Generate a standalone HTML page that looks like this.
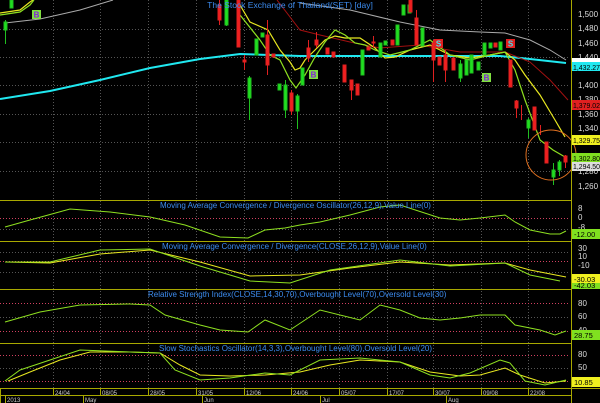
<!DOCTYPE html>
<html><head><meta charset="utf-8"><style>
html,body{margin:0;padding:0;background:#000;width:600px;height:403px;overflow:hidden}
svg{display:block}
text{font-family:"Liberation Sans",sans-serif}
</style></head><body>
<svg width="600" height="403" viewBox="0 0 600 403" xmlns="http://www.w3.org/2000/svg">
<rect width="600" height="403" fill="#000"/>
<g stroke="#555" stroke-dasharray="1,2" stroke-width="1">
<line x1="53.5" y1="0" x2="53.5" y2="388"/><line x1="100.5" y1="0" x2="100.5" y2="388"/>
<line x1="148.5" y1="0" x2="148.5" y2="388"/><line x1="196.5" y1="0" x2="196.5" y2="388"/>
<line x1="244.5" y1="0" x2="244.5" y2="388"/><line x1="291.5" y1="0" x2="291.5" y2="388"/>
<line x1="339.5" y1="0" x2="339.5" y2="388"/><line x1="387.5" y1="0" x2="387.5" y2="388"/>
<line x1="433.5" y1="0" x2="433.5" y2="388"/><line x1="481.5" y1="0" x2="481.5" y2="388"/>
<line x1="528.5" y1="0" x2="528.5" y2="388"/>
<line x1="0" y1="29.5" x2="570" y2="29.5"/><line x1="0" y1="57.5" x2="570" y2="57.5"/>
<line x1="0" y1="85.5" x2="570" y2="85.5"/><line x1="0" y1="114.5" x2="570" y2="114.5"/>
<line x1="0" y1="142.5" x2="570" y2="142.5"/><line x1="0" y1="171.5" x2="570" y2="171.5"/>
<line x1="0" y1="229.5" x2="570" y2="229.5"/><line x1="0" y1="252.5" x2="570" y2="252.5"/>
<line x1="0" y1="272.5" x2="570" y2="272.5"/><line x1="0" y1="317.5" x2="570" y2="317.5"/>
<line x1="0" y1="368.5" x2="570" y2="368.5"/>
</g>
<g stroke="#d04060" stroke-dasharray="1,2">
<line x1="0" y1="218.5" x2="570" y2="218.5"/><line x1="0" y1="261.5" x2="570" y2="261.5"/>
<line x1="0" y1="303.5" x2="570" y2="303.5"/><line x1="0" y1="331.5" x2="570" y2="331.5"/>
<line x1="0" y1="355.5" x2="570" y2="355.5"/><line x1="0" y1="381.5" x2="570" y2="381.5"/>
</g>
<polyline fill="none" stroke="#aaa" stroke-width="1" points="5,23 40,19 80,10 113,0"/>
<polyline fill="none" stroke="#aaa" stroke-width="1" points="300,3 350,10 400,22 440,30 480,32 505,33 530,40 550,50 566,60"/>
<polyline fill="none" stroke="#20e8f0" stroke-width="2" points="0,99 50,91 100,80 150,68 200,59 240,54 300,56 350,56 400,56 450,56 500,56 530,59 566,63"/>
<polyline fill="none" stroke="#a01010" stroke-width="1" points="277,0 300,30 320,35 350,42 380,48 420,45 460,52 505,52 530,62 550,80 568,100"/>
<polyline fill="none" stroke="#e8e820" stroke-width="1.2" points="0,13 20,10 30,2 33,0"/>
<polyline fill="none" stroke="#e8e820" stroke-width="1.2" points="237,0 250,22 268,30 280,50 290,62 295,70 300,68 305,60 315,50 325,40 335,36 345,38 360,38 375,48 385,58 395,57 410,50 430,45 450,55 470,58 490,55 505,52 515,60 525,75 540,95 555,120 565,137"/>
<polyline fill="none" stroke="#8ee020" stroke-width="1.2" points="0,15 20,12 30,5 34,0"/>
<polyline fill="none" stroke="#8ee020" stroke-width="1.2" points="240,15 260,40 270,55 280,60 290,80 296,88 305,75 315,57 325,42 335,30 345,35 355,43 365,45 375,50 390,55 410,50 430,40 450,55 470,60 490,55 505,52 515,70 525,100 540,140 553,150 565,157"/>
<g stroke-width="1">
<g fill="#20e020" stroke="#20c020">
<line x1="5.5" y1="20" x2="5.5" y2="44"/><rect x="4" y="22" width="3" height="8"/>
<rect x="10" y="0" width="3" height="8"/>
<line x1="226.5" y1="0" x2="226.5" y2="26"/><rect x="225" y="0" width="3" height="25"/>
<line x1="249.5" y1="76" x2="249.5" y2="120"/><rect x="248" y="78" width="3" height="20"/>
<rect x="255" y="39" width="3" height="16"/><rect x="261" y="33" width="3" height="4"/>
<rect x="278" y="84" width="3" height="6"/><line x1="285.5" y1="80" x2="285.5" y2="118"/><rect x="284" y="85" width="3" height="25"/>
<line x1="297.5" y1="94" x2="297.5" y2="129"/><rect x="296" y="96" width="3" height="15"/>
<rect x="301" y="68" width="3" height="17"/><rect x="361" y="50" width="3" height="25"/>
<rect x="379" y="43" width="3" height="14"/><rect x="384" y="41" width="3" height="4"/>
<rect x="396" y="25" width="3" height="20"/><rect x="402" y="5" width="3" height="10"/><rect x="408" y="5" width="3" height="8"/>
<rect x="421" y="28" width="3" height="18"/>
<line x1="460.5" y1="60" x2="460.5" y2="82"/><rect x="459" y="64" width="3" height="14"/>
<rect x="465" y="60" width="3" height="15"/><rect x="470" y="55" width="3" height="18"/>
<rect x="477" y="62" width="3" height="8"/><rect x="483" y="43" width="3" height="12"/><rect x="489" y="43" width="3" height="5"/>
<rect x="499" y="42" width="3" height="8"/>
<line x1="528.5" y1="118" x2="528.5" y2="138"/><rect x="527" y="120" width="3" height="8"/>
<line x1="553.5" y1="163" x2="553.5" y2="185"/><rect x="552" y="170" width="3" height="7"/>
<line x1="559.5" y1="160" x2="559.5" y2="176"/><rect x="558" y="162" width="3" height="8"/>
</g>
<g fill="#f02020" stroke="#e02020">
<line x1="219.5" y1="0" x2="219.5" y2="25"/><rect x="218" y="5" width="3" height="15"/>
<rect x="237" y="0" width="3" height="47"/><line x1="244.5" y1="55" x2="244.5" y2="70"/><rect x="243" y="60" width="3" height="2"/>
<line x1="267.5" y1="20" x2="267.5" y2="75"/><rect x="266" y="35" width="3" height="30"/>
<rect x="272" y="54" width="3" height="3"/><line x1="291.5" y1="90" x2="291.5" y2="115"/><rect x="290" y="93" width="3" height="18"/>
<line x1="308.5" y1="40" x2="308.5" y2="62"/><rect x="307" y="48" width="3" height="10"/>
<line x1="316.5" y1="32" x2="316.5" y2="48"/><rect x="315" y="40" width="3" height="5"/>
<rect x="326" y="48" width="3" height="6"/><rect x="332" y="52" width="3" height="5"/>
<rect x="343" y="65" width="3" height="17"/><line x1="351.5" y1="80" x2="351.5" y2="100"/><rect x="350" y="80" width="3" height="10"/>
<rect x="356" y="84" width="3" height="11"/><rect x="367" y="47" width="3" height="3"/>
<line x1="373.5" y1="36" x2="373.5" y2="48"/><rect x="372" y="42" width="3" height="1"/>
<rect x="391" y="40" width="3" height="5"/><rect x="409" y="0" width="3" height="12"/>
<line x1="416.5" y1="10" x2="416.5" y2="45"/><rect x="415" y="18" width="3" height="27"/>
<line x1="433.5" y1="40" x2="433.5" y2="82"/><rect x="432" y="43" width="3" height="17"/>
<rect x="438" y="57" width="3" height="8"/><line x1="445.5" y1="50" x2="445.5" y2="82"/><rect x="444" y="55" width="3" height="15"/>
<rect x="452" y="58" width="3" height="12"/><rect x="494" y="43" width="3" height="4"/>
<rect x="509" y="60" width="3" height="27"/><line x1="516.5" y1="100" x2="516.5" y2="118"/><rect x="515" y="101" width="3" height="7"/>
<line x1="521.5" y1="105" x2="521.5" y2="120"/>
<rect x="533" y="107" width="3" height="23"/><line x1="540.5" y1="125" x2="540.5" y2="135"/>
<rect x="545" y="142" width="3" height="21"/><line x1="565.5" y1="155" x2="565.5" y2="168"/><rect x="564" y="156" width="3" height="6"/>
</g>
</g>
<g font-size="8" font-weight="bold" text-anchor="middle">
<rect x="32" y="10" width="9" height="9" fill="#80e040"/><text x="36.5" y="17.5" fill="#8020e0">B</text>
<rect x="309" y="70" width="9" height="9" fill="#80e040"/><text x="313.5" y="77.5" fill="#8020e0">B</text>
<rect x="482" y="73" width="9" height="9" fill="#80e040"/><text x="486.5" y="80.5" fill="#8020e0">B</text>
<rect x="434" y="39" width="9" height="9" fill="#e02020"/><text x="438.5" y="46.5" fill="#40e0f0">S</text>
<rect x="506" y="39" width="9" height="9" fill="#e02020"/><text x="510.5" y="46.5" fill="#40e0f0">S</text>
</g>
<circle cx="551" cy="155" r="25" fill="none" stroke="#e07020" stroke-width="1"/>
<text x="290" y="8" font-size="8.5" fill="#3c8cf0" text-anchor="middle">The Stock Exchange of Thailand(SET) [day]</text>
<polyline fill="none" stroke="#8ee020" points="5,227 30,220 70,209 110,212 150,217 185,225 220,237 248,238 265,230 285,228 300,225 320,222 350,215 380,207 400,205 440,218 460,220 480,218 505,215 515,222 530,230 550,234 560,234 566,231"/>
<polyline fill="none" stroke="#e8e820" points="5,262 50,263 100,254 150,250 200,262 250,276 300,275 350,268 400,262 450,265 505,263 530,270 566,277"/>
<polyline fill="none" stroke="#8ee020" points="5,262 50,262 100,250 150,249 200,266 250,281 290,283 330,270 400,260 450,266 505,263 530,275 560,281"/>
<polyline fill="none" stroke="#8ee020" points="5,322 40,312 80,305 130,304 150,305 165,315 200,325 220,330 248,332 265,320 290,330 320,310 360,320 380,305 400,310 420,318 440,320 460,318 480,315 505,315 515,325 540,330 555,335 566,331"/>
<polyline fill="none" stroke="#e8e820" points="8,381 30,372 60,360 90,352 130,352 160,353 180,365 200,375 230,376 265,375 300,372 330,365 360,360 400,362 430,372 460,376 480,375 505,368 520,375 545,383 566,381"/>
<polyline fill="none" stroke="#8ee020" points="5,381 20,370 50,360 80,350 130,352 160,353 175,370 200,380 230,378 265,373 290,375 320,360 360,358 400,362 430,375 450,378 470,373 500,360 510,363 525,381 545,385 566,380"/>
<g font-size="8" fill="#3c8cf0">
<text x="160" y="208">Moving Average Convergence / Divergence Oscillator(26,12,9),Value Line(0)</text>
<text x="162" y="249">Moving Average Convergence / Divergence(CLOSE,26,12,9),Value Line(0)</text>
<text x="148" y="297">Relative Strength Index(CLOSE,14,30,70),Overbought Level(70),Oversold Level(30)</text>
<text x="159" y="351">Slow Stochastics Oscillator(14,3,3),Overbought Level(80),Oversold Level(20)</text>
</g>
<g stroke="#a8a800" stroke-width="1">
<line x1="0" y1="200.5" x2="571" y2="200.5"/><line x1="0" y1="241.5" x2="571" y2="241.5"/>
<line x1="0" y1="289.5" x2="571" y2="289.5"/><line x1="0" y1="343.5" x2="571" y2="343.5"/>
<line x1="0" y1="388.5" x2="600" y2="388.5"/><line x1="0" y1="395.5" x2="571" y2="395.5"/>
<line x1="571.5" y1="0" x2="571.5" y2="403"/><line x1="0.5" y1="388" x2="0.5" y2="403"/>
</g>
<g font-size="8" fill="#ddd">
<text x="578" y="17">1,500</text><text x="578" y="31">1,480</text><text x="578" y="46">1,460</text>
<text x="578" y="60">1,440</text><text x="578" y="88">1,400</text><text x="578" y="102">1,380</text>
<text x="578" y="117">1,360</text><text x="578" y="131">1,340</text><text x="578" y="174">1,280</text><text x="578" y="189">1,260</text>
<text x="578" y="211">8</text><text x="578" y="220">0</text><text x="578" y="230">-8</text>
<text x="578" y="251">30</text><text x="578" y="259">10</text><text x="578" y="268">-10</text>
<text x="578" y="306">80</text><text x="578" y="319">60</text><text x="578" y="333">40</text>
<text x="578" y="357">80</text><text x="578" y="370">50</text>
</g>
<g font-size="7.5" fill="#000" textLength="26">
<rect x="572" y="58" width="28" height="8" fill="#fff"/>
<rect x="572" y="62" width="28" height="9" fill="#20e8f0"/><text x="573" y="70" textLength="27" lengthAdjust="spacingAndGlyphs">1,432.27</text>
<rect x="572" y="100" width="28" height="10" fill="#e02020"/><text x="573" y="108" textLength="27" lengthAdjust="spacingAndGlyphs">1,379.02</text>
<rect x="572" y="135" width="28" height="10" fill="#f0f020"/><text x="573" y="143" textLength="27" lengthAdjust="spacingAndGlyphs">1,329.75</text>
<rect x="572" y="162" width="28" height="9" fill="#ddd"/><text x="573" y="169" textLength="27" lengthAdjust="spacingAndGlyphs">1,294.50</text>
<rect x="572" y="153" width="28" height="9" fill="#80e020"/><text x="573" y="161" textLength="27" lengthAdjust="spacingAndGlyphs">1,302.80</text>
<rect x="572" y="229" width="28" height="10" fill="#80e020"/><text x="574" y="237">-12.00</text>
<rect x="572" y="280" width="28" height="9" fill="#80e020"/><text x="574" y="288">-42.03</text>
<rect x="572" y="274" width="28" height="9" fill="#f0f020"/><text x="574" y="282">-30.03</text>
<rect x="572" y="330" width="28" height="10" fill="#80e020"/><text x="574" y="338">28.75</text>
<rect x="572" y="377" width="28" height="10" fill="#f0f020"/><text x="574" y="385">10.85</text>
</g>
<g stroke="#a8a800"><line x1="53.5" y1="388" x2="53.5" y2="396"/><line x1="100.5" y1="388" x2="100.5" y2="396"/><line x1="148.5" y1="388" x2="148.5" y2="396"/><line x1="196.5" y1="388" x2="196.5" y2="396"/><line x1="244.5" y1="388" x2="244.5" y2="396"/><line x1="291.5" y1="388" x2="291.5" y2="396"/><line x1="339.5" y1="388" x2="339.5" y2="396"/><line x1="387.5" y1="388" x2="387.5" y2="396"/><line x1="433.5" y1="388" x2="433.5" y2="396"/><line x1="481.5" y1="388" x2="481.5" y2="396"/><line x1="528.5" y1="388" x2="528.5" y2="396"/>
<line x1="5.5" y1="396" x2="5.5" y2="403"/><line x1="83.5" y1="396" x2="83.5" y2="403"/><line x1="202.5" y1="396" x2="202.5" y2="403"/><line x1="320.5" y1="396" x2="320.5" y2="403"/><line x1="446.5" y1="396" x2="446.5" y2="403"/></g>
<g font-size="6" fill="#ccc">
<text x="55" y="395">24/04</text><text x="102" y="395">08/05</text><text x="150" y="395">28/05</text><text x="198" y="395">31/05</text><text x="246" y="395">12/06</text><text x="293" y="395">24/06</text><text x="341" y="395">05/07</text><text x="389" y="395">17/07</text><text x="435" y="395">30/07</text><text x="483" y="395">09/08</text><text x="530" y="395">22/08</text>
<text x="7" y="402">2013</text><text x="85" y="402">May</text><text x="204" y="402">Jun</text><text x="322" y="402">Jul</text><text x="448" y="402">Aug</text>
</g>
</svg>
</body></html>
